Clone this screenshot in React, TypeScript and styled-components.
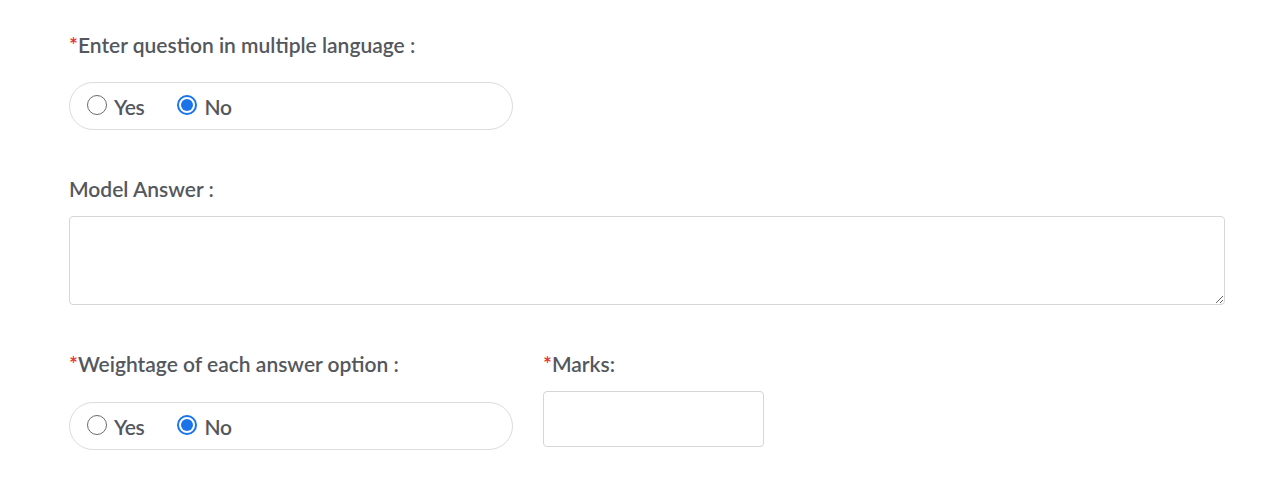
import React, { useState } from "react";
import styled, { createGlobalStyle } from "styled-components";

const Global = createGlobalStyle`
  html, body { margin: 0; padding: 0; background: #fff; }
  body { font-family: Lato, "Open Sans", sans-serif; color: #555; }
  * { box-sizing: border-box; }
`;

const Page = styled.div`
  padding: 30px 55px 0 69px;
  display: flex;
  flex-direction: column;
`;

const Field = styled.div<{ $mb?: number }>`
  display: flex;
  flex-direction: column;
  margin-bottom: ${(p) => p.$mb ?? 0}px;
`;

const Label = styled.div<{ $mb?: number }>`
  font-size: 21px;
  font-weight: 600;
  color: #54585d;
  line-height: 30px;
  margin-bottom: ${(p) => p.$mb ?? 22}px;
  letter-spacing: 0;
`;

const Star = styled.span`
  color: #e8312f;
  font-weight: 600;
`;

const Pill = styled.div`
  width: 444px;
  height: 48px;
  border: 1px solid #dcdcdc;
  border-radius: 24px;
  display: flex;
  align-items: center;
  padding-left: 17px;
  gap: 33px;
`;

const Option = styled.label`
  display: flex;
  align-items: center;
  gap: 7px;
  font-size: 21px;
  font-weight: 600;
  color: #54585d;
  letter-spacing: -0.3px;
  cursor: pointer;
`;

const RadioCircle = styled.span<{ $checked: boolean }>`
  width: 20px;
  height: 20px;
  border-radius: 50%;
  border: ${(p) => (p.$checked ? "2px solid #1a73e8" : "1.5px solid #6b6b6b")};
  display: flex;
  align-items: center;
  justify-content: center;
  margin-top: -2px;
  &::after {
    content: "";
    width: 12px;
    height: 12px;
    border-radius: 50%;
    background: #1a73e8;
    display: ${(p) => (p.$checked ? "block" : "none")};
  }
`;

const TextArea = styled.textarea`
  width: 100%;
  height: 89px;
  border: 1px solid #d6d6d6;
  border-radius: 4px;
  resize: vertical;
  font-family: inherit;
  font-size: 16px;
  outline: none;
`;

const Row = styled.div`
  display: flex;
  gap: 30px;
`;

const MarksInput = styled.input`
  width: 221px;
  height: 56px;
  border: 1px solid #d6d6d6;
  border-radius: 4px;
  outline: none;
  font-size: 16px;
  margin-top: -11px;
`;

function YesNo() {
  const [val, setVal] = useState("no");
  return (
    <Pill>
      <Option onClick={() => setVal("yes")}>
        <RadioCircle $checked={val === "yes"} />
        Yes
      </Option>
      <Option onClick={() => setVal("no")}>
        <RadioCircle $checked={val === "no"} />
        No
      </Option>
    </Pill>
  );
}

export default function App() {
  return (
    <>
      <Global />
      <Page>
        <Field $mb={44}>
          <Label>
            <Star>*</Star>Enter question in multiple language :
          </Label>
          <YesNo />
        </Field>
        <Field $mb={44}>
          <Label $mb={12}>Model Answer :</Label>
          <TextArea />
        </Field>
        <Row>
          <Field>
            <Label $mb={23}>
              <Star>*</Star>Weightage of each answer option :
            </Label>
            <YesNo />
          </Field>
          <Field>
            <Label $mb={23}>
              <Star>*</Star>Marks:
            </Label>
            <MarksInput />
          </Field>
        </Row>
      </Page>
    </>
  );
}
